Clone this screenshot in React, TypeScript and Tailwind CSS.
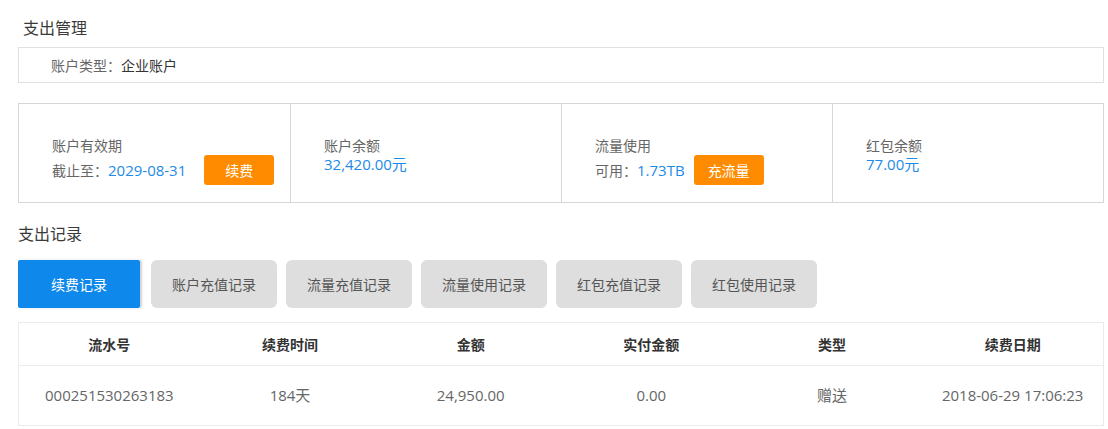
import React from "react";

const tabs = ["续费记录", "账户充值记录", "流量充值记录", "流量使用记录", "红包充值记录", "红包使用记录"];
const headers = ["流水号", "续费时间", "金额", "实付金额", "类型", "续费日期"];
const row = ["000251530263183", "184天", "24,950.00", "0.00", "赠送", "2018-06-29 17:06:23"];

const App = () => {
  return (
    <div className="w-[1108px] h-[429px] bg-white pl-[18px] pr-[4px] pt-[17px] text-[14px] text-[#333] font-['Open_Sans','Noto_Sans_CJK_SC',sans-serif]">
      <div className="pl-[5px] text-[16px] leading-[22px] text-[#3a3a3a]">支出管理</div>

      <div className="mt-[8px] h-[36px] border border-[#e0e0e0] flex items-center pl-[32px]">
        <span className="text-[#666]">账户类型：</span>
        <span className="text-[#333]">企业账户</span>
      </div>

      <div className="mt-[20px] h-[100px] border border-[#d6d6d6] grid grid-cols-4">
        <div className="pl-[33px] pt-[33px]">
          <div className="leading-[18px] text-[#666]">账户有效期</div>
          <div className="flex items-center h-[30px]">
            <span className="text-[#666]">截止至：</span>
            <span className="text-[15px] text-[#1e8ae8]">2029-08-31</span>
            <button className="ml-[18px] w-[70px] h-[30px] rounded-[3px] bg-[#ff8c00] text-white text-[14px]">续费</button>
          </div>
        </div>
        <div className="pl-[33px] pt-[33px] border-l border-[#d6d6d6]">
          <div className="leading-[18px] text-[#666]">账户余额</div>
          <div className="leading-[18px] text-[15px] text-[#1e8ae8]">32,420.00元</div>
        </div>
        <div className="pl-[33px] pt-[33px] border-l border-[#d6d6d6]">
          <div className="leading-[18px] text-[#666]">流量使用</div>
          <div className="flex items-center h-[30px]">
            <span className="text-[#666]">可用：</span>
            <span className="text-[15px] text-[#1e8ae8]">1.73TB</span>
            <button className="ml-[9px] w-[70px] h-[30px] rounded-[3px] bg-[#ff8c00] text-white text-[14px]">充流量</button>
          </div>
        </div>
        <div className="pl-[33px] pt-[33px] border-l border-[#d6d6d6]">
          <div className="leading-[18px] text-[#666]">红包余额</div>
          <div className="leading-[18px] text-[15px] text-[#1e8ae8]">77.00元</div>
        </div>
      </div>

      <div className="mt-[20px] text-[16px] leading-[22px] text-[#3a3a3a]">支出记录</div>

      <div className="mt-[15px] flex gap-[9px]">
        {tabs.map((t, i) =>
          i === 0 ? (
            <button
              key={t}
              className="w-[122px] mr-[2px] h-[48px] rounded-[2px] bg-[#0e88eb] text-white text-[14px] shadow-[2px_0_2px_rgba(0,0,0,0.18)]"
            >
              {t}
            </button>
          ) : (
            <button key={t} className="w-[126px] h-[48px] rounded-[6px] bg-[#dedede] text-[#555] text-[14px]">
              {t}
            </button>
          )
        )}
      </div>

      <div className="mt-[14px] border border-[#ebebeb]">
        <div className="grid grid-cols-6 h-[43px] border-b border-[#ebebeb] items-center text-center font-bold text-[14px] text-[#333]">
          {headers.map((h) => (
            <div key={h}>{h}</div>
          ))}
        </div>
        <div className="grid grid-cols-6 h-[59px] items-center text-center text-[15px] text-[#666]">
          {row.map((c) => (
            <div key={c}>{c}</div>
          ))}
        </div>
      </div>
    </div>
  );
};

export default App;
